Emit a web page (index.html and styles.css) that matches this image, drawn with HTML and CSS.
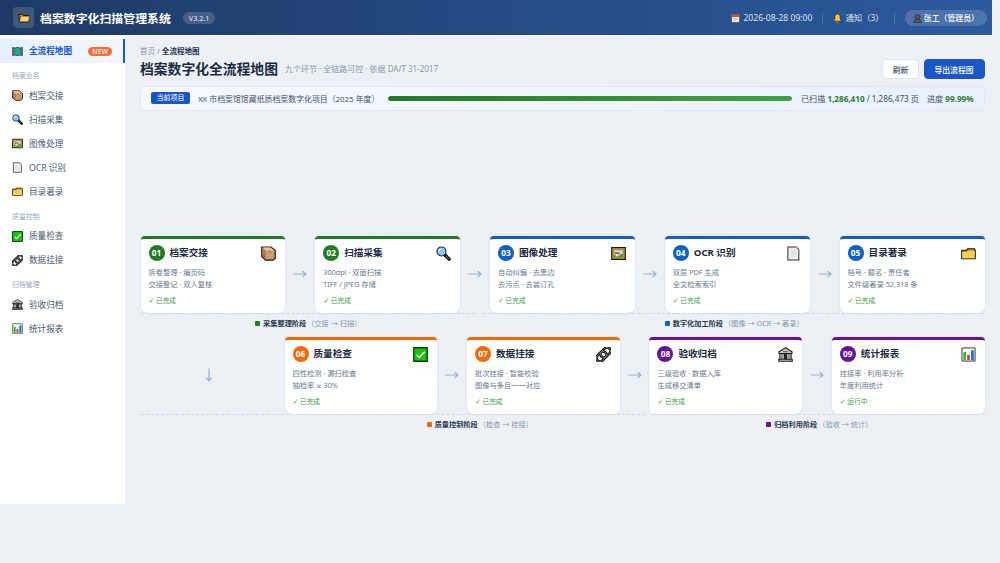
FILE: index.html
```
<!DOCTYPE html>
<html lang="zh-CN">
<head>
<meta charset="UTF-8">
<title>档案数字化扫描管理系统</title>
<link rel="stylesheet" href="styles.css">
</head>
<body>

<!-- icons -->
<svg class="sprite" width="0" height="0">
  <symbol id="i-open" viewBox="0 0 16 16"><path d="M1 3h5l1 1.500h7V13H2z" fill="#d79a27" stroke="#111" stroke-width="1.300"/><path d="M3.500 5.500h12L14 13H2z" fill="#ffd36b" stroke="#222" stroke-width=".7"/></symbol>
  <symbol id="i-map" viewBox="0 0 16 16"><path d="M1 2l3 1 4-1 4 1 3-1v12l-3-1-4 1-4-1-3 1z" fill="#2d9ad0" stroke="#333" stroke-width="1.2"/><path d="M4 4h4l1 2-2 2 1 3H6L4 8zM10 4l3 1v4l-2 2-2-3z" fill="#35a852"/><path d="M3 3v10M13 3v10" stroke="#344" stroke-width=".7"/></symbol>
  <symbol id="i-box" viewBox="0 0 16 16"><path d="M.8 1h9.700l4.700 3.500v8.500L13 15H5l-4.200-3.500z" fill="#c99b6e" stroke="#161616" stroke-width="1.200"/><path d="M1.500 2L5 5.200v9L1.500 11z" fill="#a5785a"/><path d="M2 1.700h8.300l4 3H5z" fill="#e3c6a5"/><path d="M8.500 4.700h2v3h-2z" fill="#b98255"/><path d="M2.500 10l1.500 1.500" stroke="#ef3434" stroke-width="1.500"/></symbol>
  <symbol id="i-search" viewBox="0 0 16 16"><path d="M9 9l5 5" stroke="#111" stroke-width="3.600" stroke-linecap="round"/><path d="M10.500 10.500l3.300 3.300" stroke="#666" stroke-width="1.200"/><circle cx="5.800" cy="5.800" r="4.800" fill="#8ac9f6" stroke="#22303c" stroke-width="1.200"/><path d="M3 6a3 3 0 0 1 3-3" fill="none" stroke="#d9f2ff" stroke-width="1.400"/></symbol>
  <symbol id="i-pic" viewBox="0 0 16 16"><path d="M.8 1.800h14.400v12.400H.8z" fill="#e3a92d" stroke="#171717" stroke-width="1.300"/><path d="M3 4h10v8H3z" fill="#b9e5fa" stroke="#665022" stroke-width=".6"/><path d="M3 12v-2l2-1 3 2 3-3 2 1v3z" fill="#36a944"/><path d="M4 7l1-1 2 1 2-1v3H4z" fill="#e14135"/><path d="M5 8.500h2V11H5z" fill="#fff"/></symbol>
  <symbol id="i-page" viewBox="0 0 16 16"><path d="M2 1h9l2.700 2.700V15H2z" fill="#f0f0f0" stroke="#333" stroke-width="1.100"/><path d="M11 1v3h3M5 5h5M5 7h6M5 9h6M5 11h6" fill="none" stroke="#d0d0d0" stroke-width=".7"/></symbol>
  <symbol id="i-folder" viewBox="0 0 16 16"><path d="M.8 4.500h5L7 3h7.500l.7 1.500V13.500H.8z" fill="#c98b1c" stroke="#181818" stroke-width="1.100"/><path d="M8 3.800h3" stroke="#f33c30" stroke-width="1.200"/><path d="M11 3.800h3" stroke="#35a34d" stroke-width="1.200"/><path d="M1.400 6.500l5-.2L8 5h6.500v8H1.400z" fill="#ffcf4f"/></symbol>
  <symbol id="i-check" viewBox="0 0 16 16"><path d="M.8.800h14.400v14.400H.8z" fill="#16c60c" stroke="#123d12" stroke-width="1.400"/><path d="M4 8.500l2.700 2.600L12.500 5" fill="none" stroke="#fff" stroke-width="1.700"/></symbol>
  <symbol id="i-link" viewBox="0 0 16 16"><g transform="rotate(-45 8 8)" fill="none"><rect x="-1" y="4.300" width="12" height="7.400" rx="3.700" stroke="#111" stroke-width="2.800"/><rect x="5" y="4.300" width="12" height="7.400" rx="3.700" stroke="#111" stroke-width="2.800"/><rect x="-1" y="4.300" width="12" height="7.400" rx="3.700" stroke="#999" stroke-width=".7"/><rect x="5" y="4.300" width="12" height="7.400" rx="3.700" stroke="#999" stroke-width=".7"/></g></symbol>
  <symbol id="i-bank" viewBox="0 0 16 16"><path d="M8 .8l7 4.200v2H1V5zM2 7h12v6H2zM.8 13h14.400v2.200H.8z" fill="#c9c9c9" stroke="#171717" stroke-width="1.100"/><path d="M4.300 7v6M11.700 7v6" stroke="#555" stroke-width="1"/><path d="M6.200 7.500h3.600V13H6.200z" fill="#222"/><path d="M5 5h6" stroke="#555" stroke-width="1"/></symbol>
  <symbol id="i-chart" viewBox="0 0 16 16"><path d="M1 1h14v14H1z" fill="#f4f4f4" stroke="#333" stroke-width="1"/><path d="M2.500 5.500h2.800V14H2.500z" fill="#16c60c"/><path d="M6.600 8.500h2.800V14H6.600z" fill="#e83232"/><path d="M10.800 3.500h2.800V14h-2.800z" fill="#0078d7"/></symbol>
  <symbol id="i-cal" viewBox="0 0 16 16"><path d="M1 1h14v14H1z" fill="#f3f3f3" stroke="#333" stroke-width="1"/><path d="M1 1h14v4.500H1z" fill="#e74832"/><path d="M4 8h8M4 10h8M4 12h5" stroke="#bbb" stroke-width="1"/></symbol>
  <symbol id="i-bell" viewBox="0 0 16 16"><path d="M8 .5c-4 0-4.500 3-4.500 6C3.500 9 2.500 10 .8 12.500h14.400C13.500 10 12.500 9 12.500 6.500c0-3-.5-6-4.500-6z" fill="#ffc83d" stroke="#30260d" stroke-width="1"/><path d="M6 13h4v2H6z" fill="#d67d00"/></symbol>
  <symbol id="i-user" viewBox="0 0 16 16"><path d="M1.500 15.300c0-4 2-5.500 4.500-5.500h4c2.500 0 4.500 1.500 4.500 5.500z" fill="#555" stroke="#222" stroke-width="1"/><circle cx="8" cy="5.300" r="4.500" fill="#555" stroke="#222" stroke-width="1"/></symbol>
  <symbol id="i-right" viewBox="0 0 14 8"><path d="M.5 4h12.500M9.700 1.300L13 4 9.700 6.700" fill="none" stroke="#9bb1c9" stroke-width="1.200"/></symbol>
  <symbol id="i-down" viewBox="0 0 8 14"><path d="M4 .5V13M1.300 9.700L4 13l2.700-3.300" fill="none" stroke="#9bb1c9" stroke-width="1.200"/></symbol>
</svg>

<header class="header">
  <div class="logo"><svg><use href="#i-open"/></svg></div>
  <h1>档案数字化扫描管理系统</h1>
  <span class="version">V3.2.1</span>
  <div class="header-right">
    <span class="meta"><svg><use href="#i-cal"/></svg>2026-08-28 09:00</span>
    <i class="sep"></i>
    <span class="meta notice"><svg><use href="#i-bell"/></svg>通知（3）</span>
    <i class="sep"></i>
    <span class="user"><svg><use href="#i-user"/></svg>张工（管理员）</span>
  </div>
</header>

<div class="layout">
  <nav class="sidebar">
    <a class="item active"><svg><use href="#i-map"/></svg>全流程地图<span class="new">NEW</span></a>
    <div class="group">档案业务</div>
    <a class="item"><svg><use href="#i-box"/></svg>档案交接</a>
    <a class="item"><svg><use href="#i-search"/></svg>扫描采集</a>
    <a class="item"><svg><use href="#i-pic"/></svg>图像处理</a>
    <a class="item"><svg><use href="#i-page"/></svg>OCR 识别</a>
    <a class="item"><svg><use href="#i-folder"/></svg>目录著录</a>
    <div class="group">质量控制</div>
    <a class="item"><svg><use href="#i-check"/></svg>质量检查</a>
    <a class="item"><svg><use href="#i-link"/></svg>数据挂接</a>
    <div class="group">归档管理</div>
    <a class="item"><svg><use href="#i-bank"/></svg>验收归档</a>
    <a class="item"><svg><use href="#i-chart"/></svg>统计报表</a>
  </nav>

  <main class="main">
    <div class="crumb">首页 / <b>全流程地图</b></div>
    <div class="page-head">
      <h2>档案数字化全流程地图</h2>
      <span class="sub">九个环节 · 全链路可控 · 依据 DA/T 31-2017</span>
      <button class="btn">刷新</button>
      <button class="btn primary">导出流程图</button>
    </div>

    <div class="project">
      <span class="tag">当前项目</span>
      <span class="name">XX 市档案馆馆藏纸质档案数字化项目（2025 年度）</span>
      <div class="bar"><div class="bar-fill" style="width: 99.99%"></div></div>
      <span class="stat">已扫描 <b>1,286,410</b> / 1,286,473 页</span>
      <span class="stat">进度 <b>99.99%</b></span>
    </div>

    <div class="flow">
      <div class="row">
        <div class="card green">
          <div class="card-head"><span class="num">01</span><h3>档案交接</h3><svg><use href="#i-box"/></svg></div>
          <p>拆卷整理 · 编页码<br>交接登记 · 双人复核</p>
          <div class="state"><i>✓</i>已完成</div>
        </div>
        <div class="arrow"><svg><use href="#i-right"/></svg></div>
        <div class="card green">
          <div class="card-head"><span class="num">02</span><h3>扫描采集</h3><svg><use href="#i-search"/></svg></div>
          <p>300dpi · 双面扫描<br>TIFF / JPEG 存储</p>
          <div class="state"><i>✓</i>已完成</div>
        </div>
        <div class="arrow"><svg><use href="#i-right"/></svg></div>
        <div class="card blue">
          <div class="card-head"><span class="num">03</span><h3>图像处理</h3><svg><use href="#i-pic"/></svg></div>
          <p>自动纠偏 · 去黑边<br>去污点 · 去装订孔</p>
          <div class="state"><i>✓</i>已完成</div>
        </div>
        <div class="arrow"><svg><use href="#i-right"/></svg></div>
        <div class="card blue">
          <div class="card-head"><span class="num">04</span><h3>OCR 识别</h3><svg><use href="#i-page"/></svg></div>
          <p>双层 PDF 生成<br>全文检索索引</p>
          <div class="state"><i>✓</i>已完成</div>
        </div>
        <div class="arrow"><svg><use href="#i-right"/></svg></div>
        <div class="card blue">
          <div class="card-head"><span class="num">05</span><h3>目录著录</h3><svg><use href="#i-folder"/></svg></div>
          <p>档号 · 题名 · 责任者<br>文件级著录 52,318 条</p>
          <div class="state"><i>✓</i>已完成</div>
        </div>
      </div>
      <div class="stages first">
        <div class="stage green"><i></i><b>采集整理阶段</b><span>（交接 → 扫描）</span></div>
        <div class="stage blue"><i></i><b>数字化加工阶段</b><span>（图像 → OCR → 著录）</span></div>
      </div>

      <div class="row second">
        <div class="turn"><svg><use href="#i-down"/></svg></div>
        <div class="card orange">
          <div class="card-head"><span class="num">06</span><h3>质量检查</h3><svg><use href="#i-check"/></svg></div>
          <p>四性检测 · 漏扫检查<br>抽检率 <span class="ge">≥</span> 30%</p>
          <div class="state"><i>✓</i>已完成</div>
        </div>
        <div class="arrow"><svg><use href="#i-right"/></svg></div>
        <div class="card orange">
          <div class="card-head"><span class="num">07</span><h3>数据挂接</h3><svg><use href="#i-link"/></svg></div>
          <p>批次挂接 · 智能校验<br>图像与条目一一对应</p>
          <div class="state"><i>✓</i>已完成</div>
        </div>
        <div class="arrow"><svg><use href="#i-right"/></svg></div>
        <div class="card purple">
          <div class="card-head"><span class="num">08</span><h3>验收归档</h3><svg><use href="#i-bank"/></svg></div>
          <p>三级验收 · 数据入库<br>生成移交清单</p>
          <div class="state"><i>✓</i>已完成</div>
        </div>
        <div class="arrow"><svg><use href="#i-right"/></svg></div>
        <div class="card purple">
          <div class="card-head"><span class="num">09</span><h3>统计报表</h3><svg><use href="#i-chart"/></svg></div>
          <p>挂接率 · 利用率分析<br>年度利用统计</p>
          <div class="state"><i>✓</i>运行中</div>
        </div>
      </div>
      <div class="stages last">
        <div class="stage orange"><i></i><b>质量控制阶段</b><span>（检查 → 挂接）</span></div>
        <div class="stage purple"><i></i><b>归档利用阶段</b><span>（验收 → 统计）</span></div>
      </div>
    </div>
  </main>
</div>

</body>
</html>
```
FILE: styles.css
```
* {
  box-sizing: border-box;
}

body {
  margin: 0;
  background: #edf1f6;
  font-family: "Noto Sans", "Noto Sans CJK SC", sans-serif;
  font-size: 8.6px;
  color: #1b2b41;
  overflow: hidden;
}

h1, h2, h3, p {
  margin: 0;
}

svg {
  display: block;
  flex: none;
}

.sprite {
  position: absolute;
}

/* header */
.header {
  display: flex;
  align-items: center;
  width: 992px;
  height: 35px;
  padding: 0 5px 0 13px;
  background: linear-gradient(90deg, #1e3a64, #2c5a9e);
  box-shadow: 0 1px 1px rgba(255, 255, 255, 0.9);
  color: #fff;
}

.logo {
  display: flex;
  align-items: center;
  justify-content: center;
  width: 21px;
  height: 21px;
  border-radius: 4px;
  background: rgba(255, 255, 255, 0.15);
}

.logo svg {
  width: 12px;
  height: 12px;
}

.header h1 {
  margin-left: 6px;
  font-size: 11.9px;
  line-height: 20px;
}

.version {
  height: 12px;
  margin-left: 12.5px;
  padding: 0 5.5px;
  border-radius: 6px;
  background: rgba(255, 255, 255, 0.17);
  font-size: 7.1px;
  font-weight: 500;
  line-height: 12px;
  color: #d3deee;
}

.header-right {
  display: flex;
  align-items: center;
  margin-left: auto;
  color: #d8e4f4;
}

.header-right svg {
  width: 9px;
  height: 9px;
  margin: 1px 3px 0 0;
}

.meta, .user {
  display: flex;
  align-items: center;
  line-height: 16px;
}

.notice {
  font-size: 8.4px;
}

.sep {
  width: 1px;
  height: 10px;
  margin: 0 10px;
  background: rgba(255, 255, 255, 0.18);
}

.user {
  height: 16px;
  padding: 0 8px;
  border-radius: 8px;
  background: rgba(255, 255, 255, 0.16);
  color: #fff;
  font-size: 7.9px;
  font-weight: 500;
}

.header-right .user svg {
  margin-right: 2px;
}

/* sidebar */
.layout {
  display: flex;
  align-items: flex-start;
}

.sidebar {
  width: 125px;
  height: 469px;
  padding-top: 4px;
  background: #fff;
}

.item {
  display: flex;
  align-items: center;
  height: 24px;
  padding-left: 12px;
  color: #4a5b70;
  line-height: 12px;
}

.item svg {
  width: 11px;
  height: 11px;
  margin-right: 6px;
}

.item.active {
  padding-right: 11px;
  border-right: 2px solid #1a56c8;
  background: linear-gradient(90deg, #e6f0fe, #f3f8ff);
  color: #1a56c8;
  font-weight: 600;
}

.new {
  height: 9px;
  margin-left: auto;
  padding: 0 4px;
  border-radius: 5px;
  background: #ff6b35;
  color: #fff;
  font-size: 6.9px;
  font-weight: 500;
  line-height: 9px;
}

.group {
  height: 20.6px;
  padding: 7px 0 0 12px;
  color: #98a6b9;
  font-size: 6.9px;
  line-height: 12px;
}

/* main */
.main {
  width: 875px;
  padding: 10px 15.5px 0 15px;
}

.crumb {
  height: 12px;
  color: #8694a7;
  font-size: 7.55px;
  line-height: 12px;
}

.crumb b {
  color: #25364d;
  font-weight: 600;
}

.page-head {
  display: flex;
  align-items: center;
  height: 24px;
}

.page-head h2 {
  font-size: 13.8px;
  line-height: 20px;
}

.sub {
  margin: 0 auto 1px 7px;
  color: #8a99ab;
  font-size: 8px;
}

.btn {
  width: 37px;
  height: 20px;
  padding: 0;
  border: 1px solid #dce5f1;
  border-radius: 4px;
  background: #fff;
  color: #3f5064;
  font: 500 7.8px "Noto Sans", "Noto Sans CJK SC", sans-serif;
}

.btn.primary {
  width: 61px;
  margin-left: 4.5px;
  border-color: #1a56c8;
  background: #1a56c8;
  color: #fff;
}

.project {
  display: flex;
  align-items: center;
  height: 25px;
  margin-top: 4.5px;
  padding: 0 10px;
  border: 1px solid #dfe9f8;
  border-radius: 6px;
  background: linear-gradient(90deg, #f6faff, #eaf1fe);
  color: #3f5064;
  font-size: 8.15px;
}

.tag {
  width: 39px;
  height: 12px;
  border-radius: 2px;
  background: #1a56c8;
  color: #fff;
  font-size: 6.9px;
  line-height: 12px;
  text-align: center;
}

.name {
  margin-left: 8px;
  font-size: 7.9px;
}

.bar {
  flex: 1;
  height: 5px;
  margin: 0 1px 0 8.5px;
  border-radius: 3px;
  background: #dde6f0;
  overflow: hidden;
}

.bar-fill {
  height: 5px;
  border-radius: 3px;
  background: linear-gradient(90deg, #237a29, #43a047);
}

.stat {
  margin-left: 8px;
}

.stat b {
  color: #2e7d32;
}

/* process map */
.flow {
  padding: 125px 0 0 0.5px;
}

.row {
  display: flex;
  height: 77px;
}

.card {
  flex: 1;
  padding: 6px 8px 0;
  border-top: 3px solid var(--c);
  border-radius: 4px 4px 7px 7px;
  background: #fff;
  box-shadow: 0 0 2px rgba(40, 80, 140, 0.16);
}

.green { --c: #237a29; }
.blue { --c: #1160c4; }
.orange { --c: #f06a05; }
.purple { --c: #66149a; }

.card-head {
  display: flex;
  align-items: center;
  height: 16px;
}

.num {
  width: 16px;
  height: 16px;
  border-radius: 50%;
  background: var(--c);
  color: #fff;
  font-size: 8.3px;
  font-weight: 700;
  line-height: 16px;
  text-align: center;
}

.card h3 {
  margin-left: 5px;
  font-size: 9.6px;
  line-height: 17px;
}

.card-head svg {
  width: 15px;
  height: 15px;
  margin: 1px 1px 0 auto;
}

.card p {
  margin-top: 5px;
  color: #6a7a8d;
  font-size: 7.25px;
  line-height: 12.5px;
}

.ge {
  font-family: "DejaVu Sans", sans-serif;
  font-size: 6.5px;
  line-height: 1;
}

.state {
  display: flex;
  margin-top: 5.5px;
  color: #43a047;
  font-size: 6.7px;
  line-height: 10px;
}

.state i {
  width: 7.5px;
  font-family: "DejaVu Sans", sans-serif;
  font-size: 7.2px;
  font-style: normal;
}

.arrow {
  display: flex;
  align-items: center;
  justify-content: center;
  width: 29.8px;
  padding-bottom: 1px;
}

.arrow svg {
  width: 14px;
  height: 8px;
}

.turn {
  display: flex;
  align-items: center;
  width: 144px;
  padding-left: 64px;
}

.turn svg {
  width: 8px;
  height: 14px;
}

.stages {
  display: grid;
  gap: 8px;
  height: 24px;
}

.stages.first {
  grid-template-columns: 2fr 3fr;
}

.stages.last {
  grid-template-columns: 504.5px 1fr;
}

.stage {
  display: flex;
  justify-content: center;
  height: 20px;
  padding: 3px 0 0 1px;
  border-top: 1px dashed #cfdae7;
  font-size: 7.2px;
  line-height: 12px;
}

.stages.last .orange {
  padding-left: 174px;
}

.stage i {
  width: 5px;
  height: 5px;
  margin: 4px 3px 0 0;
  border-radius: 1px;
  background: var(--c);
}

.stage b {
  margin-right: 1px;
  color: #2b3b50;
  font-weight: 600;
}

.stage span {
  color: #8796a9;
}
```
